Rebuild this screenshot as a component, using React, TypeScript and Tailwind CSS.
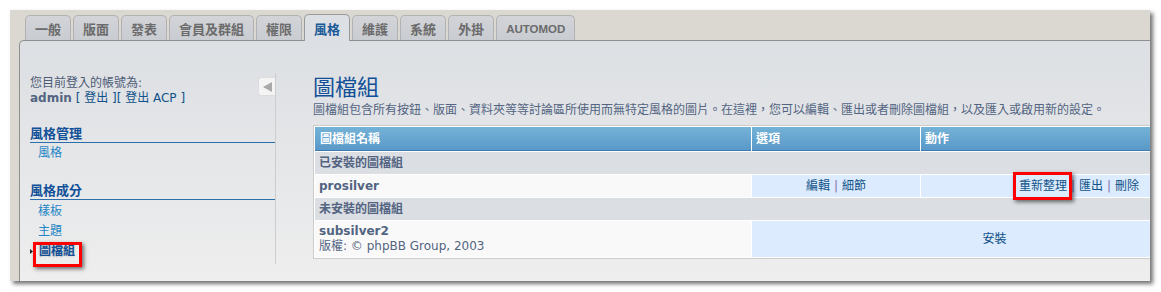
import React from "react";

const tabs = ["一般", "版面", "發表", "會員及群組", "權限", "風格", "維護", "系統", "外掛", "AUTOMOD"];

function RedBox({ className }: { className: string }) {
  return (
    <span
      className={`absolute border-[3px] border-[#ff0000] shadow-[2px_2px_4px_rgba(0,0,0,0.55)] pointer-events-none ${className}`}
    />
  );
}

function Sep() {
  return <span className="text-[#8474a8] mx-[4px]">|</span>;
}

export default function App() {
  return (
    <div className="w-[1161px] h-[292px] bg-white pl-[10px] pt-[10px] font-['DejaVu_Sans','Noto_Sans_CJK_TC',sans-serif]">
      <div className="w-[1140px] h-[271px] bg-[#dbd8d2] shadow-[3px_3px_4px_rgba(0,0,0,0.55)] flex flex-col overflow-hidden">
        {/* tabs */}
        <div className="h-[30px] pt-[5px] pl-[15px] flex items-end gap-[2px] font-['Liberation_Sans','Noto_Sans_CJK_TC',sans-serif] font-bold">
          {tabs.map((t) =>
            t === "風格" ? (
              <div
                key={t}
                className="relative z-10 h-[27px] -mb-px px-[9px] pt-[3px] flex items-center border border-b-0 border-[#999999] rounded-t-[5px] bg-[#dcdfe3] text-[13px] text-[#1a5a98]"
              >
                {t}
              </div>
            ) : (
              <div
                key={t}
                className={`h-[25px] px-[9px] pt-[3px] flex items-center border border-b-0 border-[#b2b2b2] rounded-t-[5px] bg-linear-to-b from-[#d2d4d8] to-[#c9ccd1] text-[#6b6b6b] ${
                  t === "AUTOMOD" ? "text-[11.5px]" : "text-[13px]"
                }`}
              >
                {t}
              </div>
            )
          )}
        </div>

        {/* panel */}
        <div className="flex-1 ml-[9px] border-t border-l border-[#8f8f8f] rounded-tl-[5px] bg-linear-to-b from-[#dcdfe3] to-[#eeeeee] flex pl-[10px] pt-[32px] min-w-0">
          {/* sidebar */}
          <div className="relative w-[246px] h-[191px] shrink-0 border-r border-[#cdcdcd] pt-[3px] text-[12px]">
            <button
              type="button"
              className="absolute right-0 top-[4px] w-[17px] h-[19px] flex items-center justify-center bg-[#f4f4f4] border border-r-0 border-[#dddddd] rounded-l-[3px]"
            >
              <svg width="9" height="10" viewBox="0 0 9 10">
                <polygon points="9,0 9,10 0,5" fill="#a9a9a9" />
              </svg>
            </button>
            <div className="leading-[15px] text-[#4d5b76]">您目前登入的帳號為:</div>
            <div className="leading-[15px] text-[#105289]">
              <span className="font-bold text-[#536482]">admin</span> [ 登出 ][ 登出 ACP ]
            </div>

            <div className="mt-[19px] leading-[17px] text-[13px] font-bold text-[#115098] border-b border-[#2b6eab]">
              風格管理
            </div>
            <div className="leading-[20px] pl-[8px] text-[#1e86c6]">風格</div>

            <div className="mt-[19px] leading-[17px] text-[13px] font-bold text-[#115098] border-b border-[#2b6eab]">
              風格成分
            </div>
            <div className="pt-[1px] text-[#1e86c6]">
              <div className="leading-[20px] pl-[8px]">樣板</div>
              <div className="leading-[20px] pl-[8px]">主題</div>
              <div className="leading-[20px] flex items-center">
                <span className="w-[9px] flex items-center">
                  <svg width="3" height="5" viewBox="0 0 3 5">
                    <polygon points="0,0 3,2.5 0,5" fill="#222222" />
                  </svg>
                </span>
                <span className="relative inline-block font-bold text-[#115098] [text-shadow:0_0_2px_rgba(0,0,0,0.25)]">
                  圖檔組
                  <RedBox className="-left-[6px] -right-[7px] top-[1px] -bottom-[6px]" />
                </span>
              </div>
            </div>
          </div>

          {/* main */}
          <div className="ml-[37px] pt-[2px] shrink-0">
            <h1 className="text-[22px] leading-[26px] font-normal text-[#115098]">圖檔組</h1>
            <p className="mt-[2px] text-[12px] leading-[15px] text-[#536482] whitespace-nowrap">
              圖檔組包含所有按鈕、版面、資料夾等等討論區所使用而無特定風格的圖片。在這裡，您可以編輯、匯出或者刪除圖檔組，以及匯入或啟用新的設定。
            </p>

            <table className="mt-[7px] w-[926px] table-fixed border-separate border-spacing-[1px] border border-[#cccccc] bg-white text-[12px]">
              <colgroup>
                <col className="w-[436px]" />
                <col className="w-[168px]" />
                <col />
              </colgroup>
              <thead>
                <tr>
                  <th className="h-[24px] px-[5px] text-left font-bold text-white bg-linear-to-b from-[#74b2d7] to-[#5a99c8] border-b border-[#3f7aae]">
                    圖檔組名稱
                  </th>
                  <th className="h-[24px] px-[4px] text-left font-bold text-white bg-linear-to-b from-[#74b2d7] to-[#5a99c8] border-b border-[#3f7aae]">
                    選項
                  </th>
                  <th className="h-[24px] px-[4px] text-left font-bold text-white bg-linear-to-b from-[#74b2d7] to-[#5a99c8] border-b border-[#3f7aae]">
                    動作
                  </th>
                </tr>
              </thead>
              <tbody>
                <tr>
                  <td colSpan={3} className="h-[22px] px-[4px] bg-[#dbdee2] font-bold text-[#536482]">
                    已安裝的圖檔組
                  </td>
                </tr>
                <tr>
                  <td className="h-[22px] px-[4px] bg-[#f9f9f9] font-bold text-[#536482]">prosilver</td>
                  <td className="h-[22px] px-[4px] bg-[#dcebfd] text-center text-[#105289]">
                    編輯
                    <Sep />
                    細節
                  </td>
                  <td className="h-[22px] px-[4px] bg-[#dcebfd] text-center text-[#105289]">
                    <span className="relative inline-block leading-[16px]">
                      重新整理
                      <RedBox className="-left-[6px] -right-[5px] -top-[6px] -bottom-[6px]" />
                    </span>
                    <Sep />
                    匯出
                    <Sep />
                    刪除
                  </td>
                </tr>
                <tr>
                  <td colSpan={3} className="h-[22px] px-[4px] bg-[#dbdee2] font-bold text-[#536482]">
                    未安裝的圖檔組
                  </td>
                </tr>
                <tr>
                  <td className="h-[36px] px-[4px] bg-[#f9f9f9] text-[#536482] leading-[15px]">
                    <div className="font-bold">subsilver2</div>
                    <div>版權: © phpBB Group, 2003</div>
                  </td>
                  <td colSpan={2} className="h-[36px] px-[4px] bg-[#dcebfd] text-center text-[#105289]">
                    安裝
                  </td>
                </tr>
              </tbody>
            </table>
          </div>
        </div>
      </div>
    </div>
  );
}
